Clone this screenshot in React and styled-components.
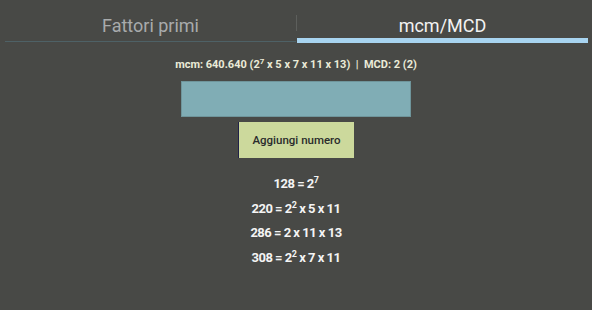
import React from "react";
import styled, { createGlobalStyle } from "styled-components";

const Global = createGlobalStyle`
  html, body { margin: 0; padding: 0; background: #484946; }
  body { width: 592px; height: 310px; overflow: hidden; font-family: Roboto, "Liberation Sans", sans-serif; }
`;

const Screen = styled.div`
  width: 592px;
  height: 310px;
  background: #484946;
  display: flex;
  flex-direction: column;
`;

const TabBar = styled.div`
  display: flex;
  height: 43px;
  padding: 0 4px 0 5px;
`;

const Tab = styled.div`
  flex: 1;
  display: flex;
  align-items: flex-start;
  justify-content: center;
  padding-top: 15px;
  font-size: 18px;
  line-height: 21px;
  color: ${(p) => (p.$active ? "#f2f2f2" : "#a8abac")};
  border-bottom: ${(p) => (p.$active ? "5px solid #a8d4f0" : "1px solid #4e6166")};
  box-sizing: border-box;
  height: ${(p) => (p.$active ? "43px" : "42px")};
`;

const Divider = styled.div`
  width: 1px;
  height: 16px;
  align-self: flex-start;
  margin-top: 15px;
  background: #5d5f5c;
`;

const Content = styled.div`
  display: flex;
  flex-direction: column;
  align-items: center;
  padding-top: 15px;
`;

const Summary = styled.div`
  font-size: 11px;
  font-weight: 700;
  color: #ebebd8;
  height: 14px;
  line-height: 14px;
  white-space: pre;
  sup { font-size: 8px; line-height: 0; vertical-align: 4px; }
`;

const InputBox = styled.div`
  width: 230px;
  height: 36px;
  margin-top: 9px;
  box-sizing: border-box;
  background: #80adb5;
  border: 1px solid #6f959b;
`;

const AddButton = styled.button`
  width: 116px;
  height: 36px;
  margin-top: 5px;
  box-sizing: border-box;
  background: #ccd99c;
  border: none;
  border-left: 1px solid #20204a;
  font-family: Roboto, "Liberation Sans", sans-serif;
  font-size: 11.5px;
  font-weight: 500;
  color: #2a2c2c;
  padding: 0;
`;

const Results = styled.div`
  display: flex;
  flex-direction: column;
  align-items: center;
  margin-top: 14px;
`;

const ResultLine = styled.div`
  height: 24.6px;
  line-height: 24px;
  font-size: 13px;
  font-weight: 700;
  letter-spacing: -0.5px;
  color: #f4f4f4;
  white-space: pre;
  sup { font-size: 9px; line-height: 0; vertical-align: 5px; }
`;

const results = [
  ["128 = 2", "7", ""],
  ["220 = 2", "2", " x 5 x 11"],
  ["286 = 2 x 11 x 13", null, ""],
  ["308 = 2", "2", " x 7 x 11"],
];

export default function App() {
  return (
    <Screen>
      <Global />
      <TabBar>
        <Tab>Fattori primi</Tab>
        <Divider />
        <Tab $active>mcm/MCD</Tab>
      </TabBar>
      <Content>
        <Summary>
          mcm: 640.640 (2<sup>7</sup> x 5 x 7 x 11 x 13)  |  MCD: 2 (2)
        </Summary>
        <InputBox />
        <AddButton>Aggiungi numero</AddButton>
        <Results>
          {results.map(([a, s, b], i) => (
            <ResultLine key={i}>
              {a}
              {s && <sup>{s}</sup>}
              {b}
            </ResultLine>
          ))}
        </Results>
      </Content>
    </Screen>
  );
}
